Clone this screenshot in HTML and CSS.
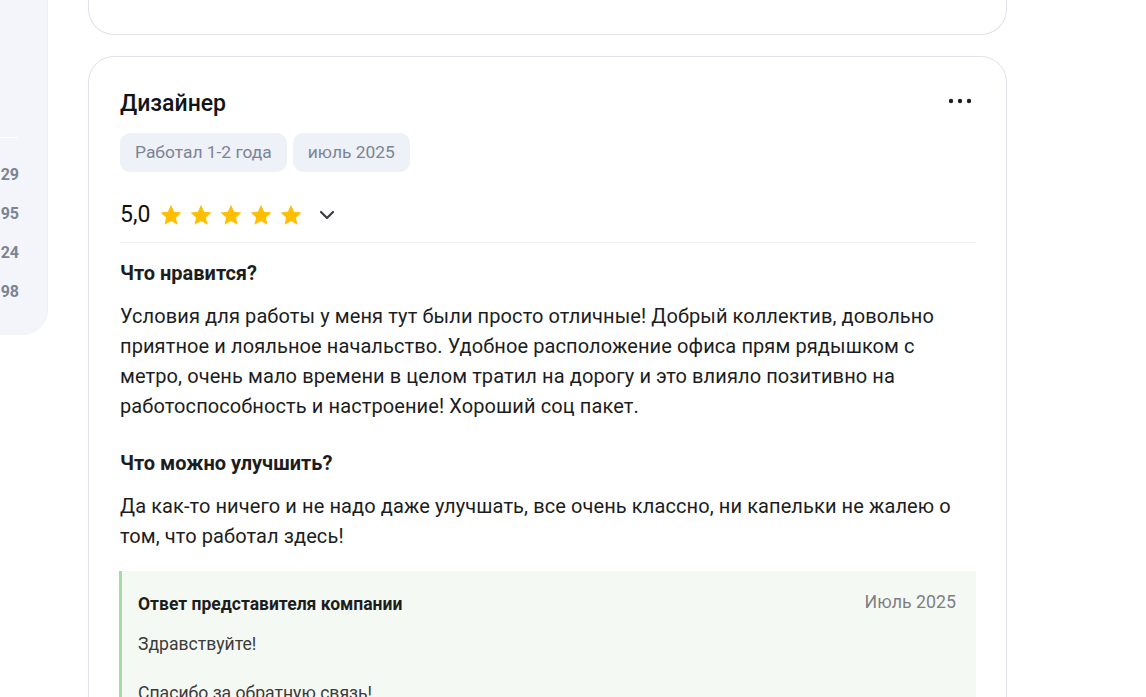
FILE: index.html
```html
<!DOCTYPE html>
<html lang="ru">
<head>
<meta charset="utf-8">
<title>Отзыв</title>
<link rel="stylesheet" href="styles.css">
</head>
<body>
<div class="page">
  <aside class="sidebar">
    <div class="sidebar-top"></div>
    <div class="sidebar-divider"></div>
    <ul class="sidebar-nums">
      <li>29</li>
      <li>95</li>
      <li>24</li>
      <li>98</li>
    </ul>
  </aside>
  <main class="feed">
    <div class="card card-prev"></div>
    <article class="card review">
      <header class="review-head">
        <h2 class="review-title">Дизайнер</h2>
        <button class="more" aria-label="Ещё">
          <svg width="24" height="8" viewBox="0 0 24 8"><circle cx="3" cy="4" r="2.2" fill="#1b1f26"/><circle cx="12" cy="4" r="2.2" fill="#1b1f26"/><circle cx="21" cy="4" r="2.2" fill="#1b1f26"/></svg>
        </button>
      </header>
      <div class="tags">
        <span class="tag">Работал 1-2 года</span>
        <span class="tag">июль 2025</span>
      </div>
      <div class="rating">
        <span class="rating-value">5,0</span>
        <span class="stars">
          <svg class="star" viewBox="0 0 24 24"><path d="M12 1.8l3.1 6.9 7.4.7-5.6 5 1.7 7.4L12 17.9l-6.6 3.9 1.7-7.4-5.6-5 7.4-.7z"/></svg>
          <svg class="star" viewBox="0 0 24 24"><path d="M12 1.8l3.1 6.9 7.4.7-5.6 5 1.7 7.4L12 17.9l-6.6 3.9 1.7-7.4-5.6-5 7.4-.7z"/></svg>
          <svg class="star" viewBox="0 0 24 24"><path d="M12 1.8l3.1 6.9 7.4.7-5.6 5 1.7 7.4L12 17.9l-6.6 3.9 1.7-7.4-5.6-5 7.4-.7z"/></svg>
          <svg class="star" viewBox="0 0 24 24"><path d="M12 1.8l3.1 6.9 7.4.7-5.6 5 1.7 7.4L12 17.9l-6.6 3.9 1.7-7.4-5.6-5 7.4-.7z"/></svg>
          <svg class="star" viewBox="0 0 24 24"><path d="M12 1.8l3.1 6.9 7.4.7-5.6 5 1.7 7.4L12 17.9l-6.6 3.9 1.7-7.4-5.6-5 7.4-.7z"/></svg>
        </span>
        <svg class="chevron" width="16" height="10" viewBox="0 0 16 10"><path d="M2 2l6 6 6-6" fill="none" stroke="#3a3d42" stroke-width="2.2" stroke-linecap="round" stroke-linejoin="round"/></svg>
      </div>
      <div class="review-body">
        <h3 class="section-title">Что нравится?</h3>
        <p class="section-text">Условия для работы у меня тут были просто отличные! Добрый коллектив, довольно приятное и лояльное начальство. Удобное расположение офиса прям рядышком с метро, очень мало времени в целом тратил на дорогу и это влияло позитивно на работоспособность и настроение! Хороший соц пакет.</p>
        <h3 class="section-title section-title-gap">Что можно улучшить?</h3>
        <p class="section-text">Да как-то ничего и не надо даже улучшать, все очень классно, ни капельки не жалею о том, что работал здесь!</p>
      </div>
      <section class="reply">
        <div class="reply-head">
          <h4 class="reply-title">Ответ представителя компании</h4>
          <span class="reply-date">Июль 2025</span>
        </div>
        <p class="reply-text">Здравствуйте!</p>
        <p class="reply-text reply-gap">Спасибо за обратную связь!</p>
      </section>
    </article>
  </main>
</div>
</body>
</html>
```
FILE: styles.css
```css
* { box-sizing: border-box; }
html, body { margin: 0; padding: 0; background: #fff; }
body {
  font-family: Roboto, "Noto Sans", "Liberation Sans", sans-serif;
  color: #1b1d21;
  overflow: hidden;
  height: 697px;
}
.page {
  display: flex;
  align-items: flex-start;
}
.sidebar {
  width: 48px;
  height: 335px;
  flex: none;
  background: #f3f5fa;
  border-right: 1px solid #eceef3;
  border-bottom-right-radius: 26px;
  display: flex;
  flex-direction: column;
}
.sidebar-top { height: 137px; }
.sidebar-divider {
  width: 18px;
  height: 1px;
  background: #ffffff;
}
.sidebar-nums {
  list-style: none;
  margin: 0;
  padding: 26px 0 0 0;
  width: 19px;
  text-align: right;
  display: flex;
  flex-direction: column;
  gap: 17px;
}
.sidebar-nums li {
  font-size: 16px;
  line-height: 22px;
  font-weight: 700;
  color: #7b8494;
}
.feed {
  margin-left: 40px;
  width: 919px;
  display: flex;
  flex-direction: column;
  gap: 21px;
}
.card {
  border: 1px solid #dfe2ea;
  border-radius: 26px;
  background: #fff;
}
.card-prev {
  height: 35px;
  border-top: none;
  border-top-left-radius: 0;
  border-top-right-radius: 0;
}
.review {
  padding: 33px 30px 0 31px;
  height: 700px;
}
.review-head {
  display: flex;
  justify-content: space-between;
  align-items: flex-start;
}
.review-title {
  margin: 0;
  font-size: 23px;
  line-height: 28px;
  font-weight: 500;
  color: #111316;
}
.more {
  border: none;
  background: none;
  padding: 0;
  margin: 7px 4px 0 0;
  line-height: 0;
}
.tags {
  display: flex;
  gap: 6px;
  margin-top: 15px;
}
.tag {
  height: 39px;
  padding: 0 15px;
  border-radius: 10px;
  background: #eef1f7;
  color: #7b8494;
  font-size: 17.4px;
  line-height: 39px;
}
.rating {
  display: flex;
  align-items: center;
  margin-top: 29px;
  height: 28px;
}
.rating-value {
  font-size: 23px;
  line-height: 28px;
  font-weight: 400;
  color: #111;
  margin-right: 9px;
}
.stars {
  display: flex;
  gap: 6px;
}
.star {
  width: 24px;
  height: 24px;
  fill: #ffbf00;
}
.chevron {
  margin-left: 16px;
}
.review-body {
  margin-top: 13px;
  border-top: 1px solid #eef0f4;
  padding-top: 19px;
}
.section-title {
  margin: 0;
  font-size: 20px;
  line-height: 22px;
  font-weight: 700;
  color: #1b1d21;
}
.section-title-gap { margin-top: 31px; }
.section-text {
  margin: 17px 0 0 0;
  font-size: 20px;
  line-height: 30px;
  letter-spacing: 0.1px;
  color: #1b1d21;
}
.reply {
  margin-top: 20px;
  margin-left: -1px;
  background: #f5f9f4;
  border-left: 3px solid #a6dba6;
  padding: 22px 20px 0 16px;
  height: 200px;
}
.reply-head {
  display: flex;
  justify-content: space-between;
  align-items: flex-start;
}
.reply-title {
  margin: 0;
  font-size: 17.5px;
  line-height: 22px;
  font-weight: 700;
  color: #1b1d21;
}
.reply-date {
  font-size: 17.8px;
  line-height: 18px;
  color: #7f7f7f;
}
.reply-text {
  margin: 17px 0 0 0;
  font-size: 17.6px;
  line-height: 24px;
  color: #3b3b3b;
}
.reply-gap { margin-top: 25px; }
```
